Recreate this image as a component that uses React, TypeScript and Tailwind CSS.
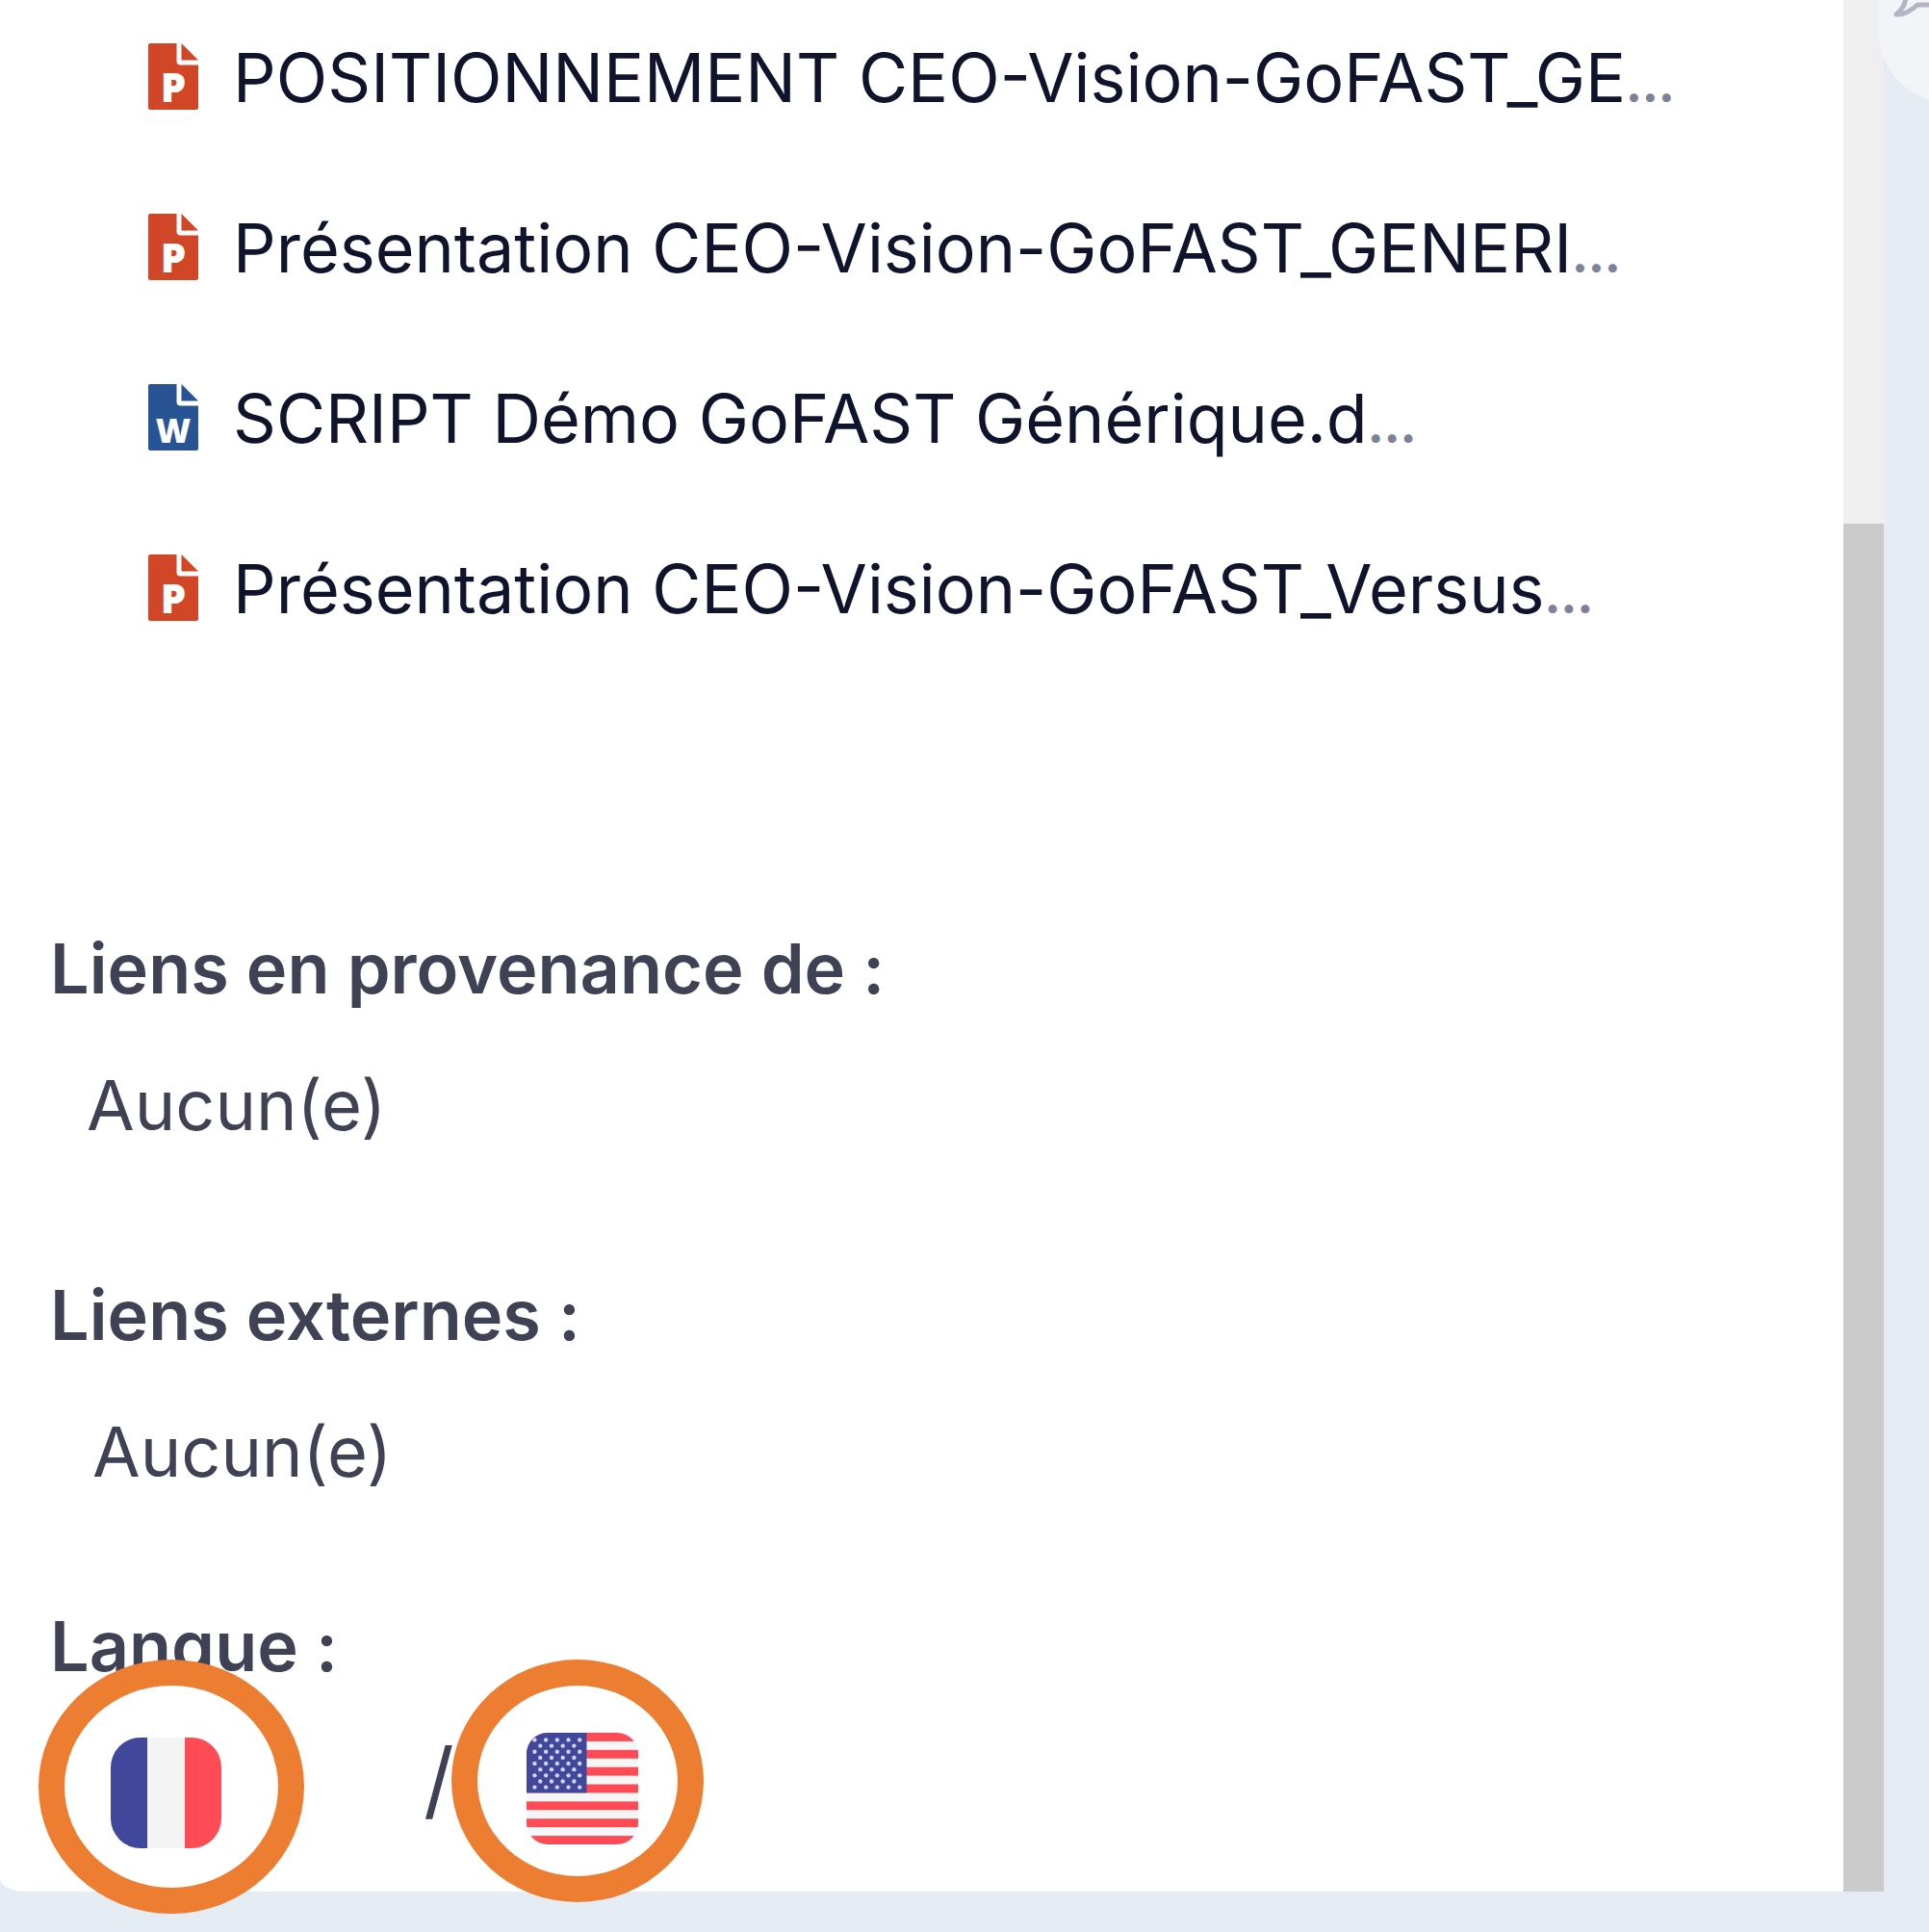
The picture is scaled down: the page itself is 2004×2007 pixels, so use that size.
type FileKind = "powerpoint" | "word";

const files: { kind: FileKind; name: string }[] = [
  { kind: "powerpoint", name: "POSITIONNEMENT CEO-Vision-GoFAST_GE" },
  { kind: "powerpoint", name: "Présentation CEO-Vision-GoFAST_GENERI" },
  { kind: "word", name: "SCRIPT Démo GoFAST Générique.d" },
  { kind: "powerpoint", name: "Présentation CEO-Vision-GoFAST_Versus" },
];

function FileIcon({ kind }: { kind: FileKind }) {
  const word = kind === "word";
  return (
    <svg
      viewBox="0 0 52 69"
      className={`h-[69px] w-[52px] shrink-0 overflow-visible ${word ? "text-[#285394]" : "text-[#d04626]"}`}
      aria-hidden="true"
    >
      <path
        fill="currentColor"
        d="M2 0H29.500V18.500Q29.500 22.500 33.500 22.500H52V67Q52 69 50 69H2Q0 69 0 67V2Q0 0 2 0ZM34.500 0 52 17.500H34.500Z"
      />
      <text
        x="26"
        y="61"
        textAnchor="middle"
        fill="#fff"
        className={`font-['Open_Sans',sans-serif] font-extrabold ${word ? "text-[35px]" : "text-[42px]"}`}
      >
        {word ? "W" : "P"}
      </text>
    </svg>
  );
}

function FrenchFlag() {
  return (
    <svg viewBox="0 0 115 115" className="size-[115px]" aria-hidden="true">
      <clipPath id="fr-clip">
        <rect width="115" height="115" rx="31" />
      </clipPath>
      <g clipPath="url(#fr-clip)">
        <rect width="115" height="115" fill="#f4f4f4" />
        <rect width="38" height="115" fill="#41479b" />
        <rect x="77" width="38" height="115" fill="#ff4b55" />
      </g>
    </svg>
  );
}

function AmericanFlag() {
  const rows = [0, 1, 2, 3, 4, 5, 6, 7, 8];
  return (
    <svg viewBox="0 0 117 117" className="size-[116px]" aria-hidden="true">
      <clipPath id="us-clip">
        <rect width="117" height="117" rx="22" />
      </clipPath>
      <g clipPath="url(#us-clip)">
        <rect width="117" height="117" fill="#f5f7f7" />
        {[0, 2, 4, 6, 8, 10, 12].map((i) => (
          <rect key={i} y={i * 9} width="117" height="9" fill="#ff4b55" />
        ))}
        <rect width="63" height="63" fill="#41479b" />
        {rows.map((r) =>
          (r % 2 ? [0, 1, 2, 3] : [0, 1, 2, 3, 4]).map((c) => (
            <circle
              key={`${r}-${c}`}
              cx={8.5 + c * 11.8 + (r % 2 ? 5.9 : 0)}
              cy={7.5 + r * 6.2}
              r="2.2"
              fill="#d3d5ea"
            />
          )),
        )}
      </g>
    </svg>
  );
}

function LinkSection({ title, inset }: { title: string; inset: string }) {
  return (
    <section>
      <h2 className="text-[72px] leading-[72px] font-semibold">{title}</h2>
      <p className={`mt-[70px] text-[72px] leading-[72px] ${inset}`}>Aucun(e)</p>
    </section>
  );
}

export default function App() {
  return (
    <div className="relative flex min-h-screen flex-col overflow-hidden bg-[#e5ecf4] pr-[47px] pb-[42px] font-['Inter',sans-serif] text-[#3f4254]">
      <div className="flex flex-1">
        <main className="min-w-0 flex-1 rounded-bl-[26px_14px] bg-white pt-[45px] pb-[45px] pl-[52px]">
          <ul className="flex flex-col gap-[105px] pl-[102px]">
            {files.map((file) => (
              <li key={file.name}>
                <a href="#" className="flex items-start gap-9 whitespace-nowrap">
                  <FileIcon kind={file.kind} />
                  <span className="text-[70px] leading-[72px] text-[#0f132b]">
                    {file.name}
                    <span className="text-[48px] leading-[48px] font-extrabold text-[#7e8299]">…</span>
                  </span>
                </a>
              </li>
            ))}
          </ul>

          <div className="mt-[322px] flex flex-col gap-[146px]">
            <LinkSection title="Liens en provenance de :" inset="pl-[38px]" />
            <LinkSection title="Liens externes :" inset="pl-[44px]" />
          </div>

          <section className="mt-[130px]">
            <h2 className="text-[72px] leading-[72px] font-semibold">Langue :</h2>
            <div className="mt-[54px] flex items-start pl-[63px]">
              <button type="button" aria-label="Français" className="relative mt-[5px]">
                <FrenchFlag />
                <span className="absolute -top-[81px] -left-[75px] h-[264px] w-[276px] rounded-[50%] border-[27px] border-[#ed7d31]" />
              </button>
              <span className="w-[317px] pl-[210px] text-[88px] leading-[96px]">/</span>
              <button type="button" aria-label="English" className="relative">
                <AmericanFlag />
                <span className="absolute -top-[76px] -left-[78px] h-[252px] w-[262px] rounded-[50%] border-[27px] border-[#ed7d31]" />
              </button>
            </div>
          </section>
        </main>
        <div className="flex w-[42px] flex-col bg-[#efefef] pt-[544px]">
          <div className="flex-1 bg-[#cbcbcb]" />
        </div>
      </div>

      <button
        type="button"
        aria-label="Discussion"
        className="absolute -top-[41px] -right-[96px] h-[148px] w-[148px] rounded-b-[74px] bg-[#f1f5f8]"
      >
        <svg
          viewBox="0 0 148 148"
          className="size-[148px]"
          fill="none"
          stroke="#b5b3c5"
          strokeWidth="5"
          strokeLinejoin="round"
          aria-hidden="true"
        >
          <path d="M28 20V38Q27 49 18 56Q28 57 40 46H88Q98 46 98 38V20Q98 10 88 10H38Q28 10 28 20Z" />
        </svg>
      </button>
    </div>
  );
}
